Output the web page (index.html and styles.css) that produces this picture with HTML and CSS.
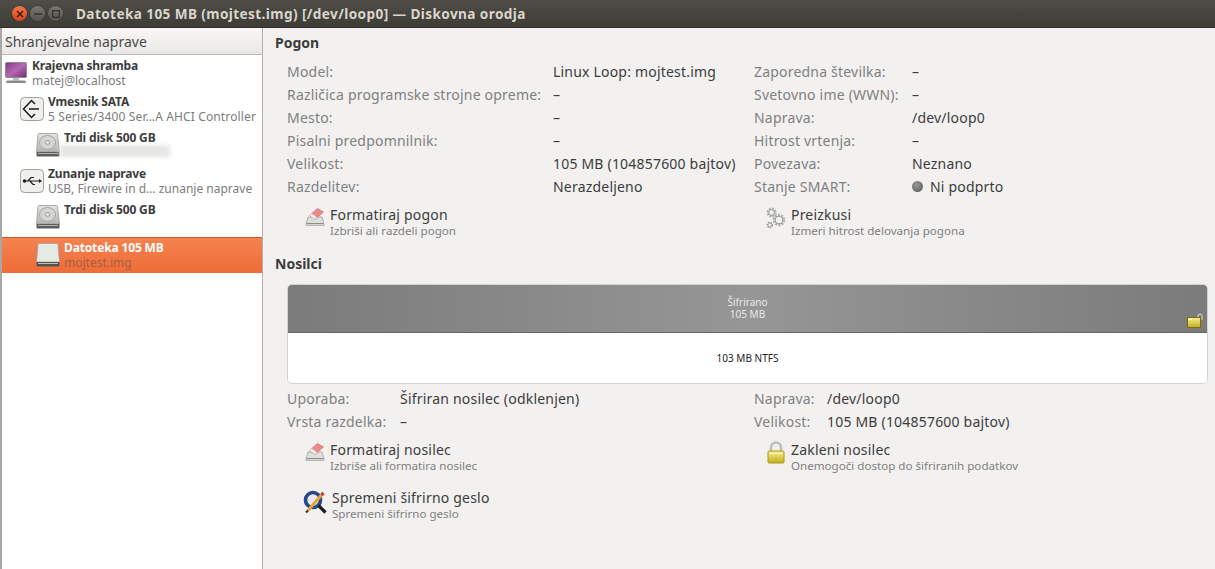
FILE: index.html
```html
<!DOCTYPE html>
<html lang="sl">
<head>
<meta charset="utf-8">
<title>Diskovna orodja</title>
<link rel="stylesheet" href="styles.css">
</head>
<body>
<svg class="defs" width="0" height="0" aria-hidden="true">
  <defs>
    <linearGradient id="hddBody" x1="0" y1="0" x2="0" y2="1"><stop offset="0" stop-color="#e4e4e2"/><stop offset="1" stop-color="#b4b4b0"/></linearGradient>
    <linearGradient id="gold" x1="0" y1="0" x2="0" y2="1"><stop offset="0" stop-color="#f6ee8e"/><stop offset="1" stop-color="#c4ae1e"/></linearGradient>
    <linearGradient id="screen" x1="0" y1="0" x2="1" y2="1"><stop offset="0" stop-color="#7a3a86"/><stop offset=".5" stop-color="#b668b4"/><stop offset="1" stop-color="#6a2c70"/></linearGradient>
    <symbol id="hdd" viewBox="0 0 24 24">
      <path d="M3 .5h17.500a1 1 0 0 1 1 1L23.500 19H.5L2 1.500a1 1 0 0 1 1-1z" fill="url(#hddBody)" stroke="#9a9a96" stroke-width=".8"/>
      <ellipse cx="11.500" cy="9.500" rx="8" ry="7" fill="#d4d4d1" stroke="#a4a4a0"/>
      <ellipse cx="11.500" cy="9.500" rx="2.200" ry="1.800" fill="#efefec" stroke="#999"/>
      <path d="M.5 19h23v3.500a1 1 0 0 1-1 1h-21a1 1 0 0 1-1-1z" fill="#5c5c58"/>
      <path d="M2 20.500h20" stroke="#c9c9c5" stroke-width=".8"/>
    </symbol>
    <symbol id="fmt" viewBox="0 0 20 20">
      <path d="M3 10h14l2 7v1.500H1V17z" fill="#dededb" stroke="#a2a29e" stroke-width=".8"/>
      <path d="M1.500 16.500h17" stroke="#8d8d89"/>
      <path d="M1.500 18h17" stroke="#c5c5c1"/>
      <path d="M4.500 8.500 12.500 1.500l6 3.500-8.500 7.500z" fill="#ec8a8c" stroke="#c96a6c" stroke-width=".7"/>
      <path d="M4.500 8.500l5.500 4 2.200-2-5.500-4z" fill="#f3f0ee" stroke="#c4bcb8" stroke-width=".5"/>
    </symbol>
    <symbol id="gears" viewBox="0 0 20 22">
      <g fill="none">
        <circle cx="5.500" cy="5.500" r="3.600" stroke="#b4b4b1" stroke-width="2.800" stroke-dasharray="1.900 .9"/>
        <circle cx="5.500" cy="5.500" r="3" stroke="#a2a29f" stroke-width="1"/>
        <circle cx="13" cy="13" r="4.800" stroke="#b4b4b1" stroke-width="3" stroke-dasharray="2 1"/>
        <circle cx="13" cy="13" r="4" stroke="#9f9f9c" stroke-width="1"/>
        <circle cx="3.800" cy="18" r="2.200" stroke="#8f8f8c" stroke-width="2" stroke-dasharray="1.200 .8"/>
      </g>
    </symbol>
    <symbol id="lock" viewBox="0 0 20 24">
      <path d="M5 11V6.500a5 5 0 0 1 10 0V11" fill="none" stroke="#bdbdb9" stroke-width="2.400"/>
      <rect x="2" y="10" width="16" height="12" rx="1" fill="url(#gold)" stroke="#a8961a"/>
      <path d="M3 12.500h14" stroke="#fbf6b8"/>
    </symbol>
    <symbol id="key" viewBox="0 0 26 26">
      <circle cx="10" cy="10" r="7.500" fill="none" stroke="#28478f" stroke-width="3.600"/>
      <circle cx="10" cy="10" r="5" fill="#e7e9ee" opacity=".8"/>
      <path d="M15.500 15.500l7 7" stroke="#1d1d1d" stroke-width="3.200"/>
      <path d="M5 20.500 18.500 5" stroke="#e8a33a" stroke-width="3.200"/>
      <path d="M18.500 5l2-2" stroke="#c23a28" stroke-width="3.200"/>
      <path d="M5 20.500l-2 2" stroke="#333" stroke-width="2.200"/>
    </symbol>
  </defs>
</svg>

<div class="window">
  <header class="titlebar">
    <div class="controls">
      <span class="ctl close"><svg viewBox="0 0 8 8" width="8" height="8"><path d="M1 1l6 6M7 1 1 7" stroke="#3a1508" stroke-width="1.400"/></svg></span>
      <span class="ctl"><svg viewBox="0 0 8 8" width="8" height="8"><path d="M0 4h8" stroke="#2f2e2a" stroke-width="1.400"/></svg></span>
      <span class="ctl"><svg viewBox="0 0 8 8" width="8" height="8"><rect x=".7" y=".7" width="6.600" height="6.600" fill="none" stroke="#2f2e2a" stroke-width="1.200"/></svg></span>
    </div>
    <h1 class="title">Datoteka 105 MB (mojtest.img) [/dev/loop0] — Diskovna orodja</h1>
  </header>

  <div class="content">
    <aside class="sidebar">
      <div class="side-head">Shranjevalne naprave</div>
      <ul class="tree">
        <li class="node lvl0">
          <svg class="node-icon" width="24" height="24" viewBox="0 0 24 24"><rect x="1.500" y="1.500" width="21" height="15" rx="1" fill="url(#screen)" stroke="#8e8e8a"/><path d="M9 17h6v2.500H9z" fill="#bdbdb9"/><path d="M3 19.500h18l1.500 2.500h-21z" fill="#8b8b87"/></svg>
          <div class="node-text"><b>Krajevna shramba</b><span>matej@localhost</span></div>
        </li>
        <li class="node lvl1">
          <svg class="node-icon" width="24" height="24" viewBox="0 0 24 24"><rect x=".5" y=".5" width="23" height="23" rx="4" fill="#f0efeb" stroke="#a3a39f"/><path d="M15 7 11.500 3.500 3.500 12l8 8.500L15 17M9 12h10" fill="none" stroke="#1c1c1c" stroke-width="1.500"/></svg>
          <div class="node-text"><b>Vmesnik SATA</b><span class="wide-sub">5 Series/3400 Ser…A AHCI Controller</span></div>
        </li>
        <li class="node lvl2">
          <svg class="node-icon" width="24" height="24"><use href="#hdd"/></svg>
          <div class="node-text"><b>Trdi disk 500 GB</b><span class="smudge"></span></div>
        </li>
        <li class="node lvl1">
          <svg class="node-icon" width="24" height="24" viewBox="0 0 24 24"><rect x=".5" y=".5" width="23" height="23" rx="4" fill="#f0efeb" stroke="#a3a39f"/><path d="M4 12h16M8 12l3-3.500h3M10 12l3 3.500h2" fill="none" stroke="#1c1c1c" stroke-width="1.200"/><circle cx="4.500" cy="12" r="1.700" fill="#1c1c1c"/><path d="M19 10l3 2-3 2z" fill="#1c1c1c"/></svg>
          <div class="node-text"><b>Zunanje naprave</b><span>USB, Firewire in d… zunanje naprave</span></div>
        </li>
        <li class="node lvl2">
          <svg class="node-icon" width="24" height="24"><use href="#hdd"/></svg>
          <div class="node-text"><b>Trdi disk 500 GB</b></div>
        </li>
        <li class="node lvl2 selected">
          <svg class="node-icon" width="24" height="24" viewBox="0 0 24 24"><path d="M3 .5h18a1 1 0 0 1 1 1L23.500 19H.5L2 1.500a1 1 0 0 1 1-1z" fill="#e8e8e5" stroke="#a5a5a1" stroke-width=".8"/><path d="M.5 19h23v3.500a1 1 0 0 1-1 1h-21a1 1 0 0 1-1-1z" fill="#55554f"/><path d="M2 20.500h20" stroke="#d6d6d2" stroke-width=".8"/></svg>
          <div class="node-text"><b>Datoteka 105 MB</b><span>mojtest.img</span></div>
        </li>
      </ul>
    </aside>

    <main class="main">
      <section class="drive">
        <h2 class="heading">Pogon</h2>
        <dl class="props props-drive">
          <dt>Model:</dt><dd>Linux Loop: mojtest.img</dd><dt>Zaporedna številka:</dt><dd>–</dd>
          <dt>Različica programske strojne opreme:</dt><dd>–</dd><dt>Svetovno ime (WWN):</dt><dd>–</dd>
          <dt>Mesto:</dt><dd>–</dd><dt>Naprava:</dt><dd>/dev/loop0</dd>
          <dt>Pisalni predpomnilnik:</dt><dd>–</dd><dt>Hitrost vrtenja:</dt><dd>–</dd>
          <dt>Velikost:</dt><dd>105 MB (104857600 bajtov)</dd><dt>Povezava:</dt><dd>Neznano</dd>
          <dt>Razdelitev:</dt><dd>Nerazdeljeno</dd><dt>Stanje SMART:</dt><dd><i class="dot"></i>Ni podprto</dd>
        </dl>
        <div class="actions">
          <div class="action">
            <svg class="act-icon" width="20" height="20"><use href="#fmt"/></svg>
            <div class="act-text"><b>Formatiraj pogon</b><span>Izbriši ali razdeli pogon</span></div>
          </div>
          <div class="action">
            <svg class="act-icon" width="20" height="22"><use href="#gears"/></svg>
            <div class="act-text"><b>Preizkusi</b><span>Izmeri hitrost delovanja pogona</span></div>
          </div>
        </div>
      </section>

      <section class="volumes">
        <h2 class="heading">Nosilci</h2>
        <div class="volbar">
          <div class="vol-top">
            <span>Šifrirano</span><span>105 MB</span>
            <svg class="vol-lock" width="16" height="15" viewBox="0 0 16 15"><path d="M11 6V3.200a2 2 0 0 1 4 0V7" fill="none" stroke="#c4c4c0" stroke-width="1.300"/><rect x=".5" y="4.500" width="13" height="10" fill="url(#gold)" stroke="#7d6e08"/><path d="M2 6.500h3" stroke="#fff"/></svg>
          </div>
          <div class="vol-bottom">103 MB NTFS</div>
        </div>
        <dl class="props props-vol">
          <dt>Uporaba:</dt><dd>Šifriran nosilec (odklenjen)</dd><dt>Naprava:</dt><dd>/dev/loop0</dd>
          <dt>Vrsta razdelka:</dt><dd>–</dd><dt>Velikost:</dt><dd>105 MB (104857600 bajtov)</dd>
        </dl>
        <div class="actions">
          <div class="action">
            <svg class="act-icon" width="20" height="20"><use href="#fmt"/></svg>
            <div class="act-text"><b>Formatiraj nosilec</b><span>Izbriše ali formatira nosilec</span></div>
          </div>
          <div class="action">
            <svg class="act-icon lock-icon" width="20" height="24"><use href="#lock"/></svg>
            <div class="act-text"><b>Zakleni nosilec</b><span>Onemogoči dostop do šifriranih podatkov</span></div>
          </div>
          <div class="action action-key">
            <svg class="act-icon" width="26" height="26"><use href="#key"/></svg>
            <div class="act-text"><b>Spremeni šifrirno geslo</b><span>Spremeni šifrirno geslo</span></div>
          </div>
        </div>
      </section>
    </main>
  </div>
</div>
</body>
</html>
```

FILE: styles.css
```css
* { box-sizing: border-box; }
html, body { margin: 0; padding: 0; height: 100%; overflow: hidden; }
body { font-family: "Noto Sans", "Open Sans", sans-serif; font-size: 14px; color: #3c3c3c; background: #f2f1f0; }
.defs { position: absolute; }
.window { height: 569px; display: flex; flex-direction: column; }

.titlebar { height: 28px; flex: none; display: flex; align-items: center; padding: 0 0 0 12px; background: linear-gradient(#4f4d47, #3d3c37); border-bottom: 1px solid #2e2d29; }
.controls { display: flex; gap: 3px; width: 64px; flex: none; }
.ctl { width: 15px; height: 15px; border-radius: 50%; background: linear-gradient(#77766f, #55544e); display: flex; align-items: center; justify-content: center; box-shadow: 0 0 0 .5px #33322e; }
.ctl.close { background: linear-gradient(#f2784a, #d6451b); }
.title { margin: 0; font-size: 13.600px; font-weight: 700; color: #d9d5cb; letter-spacing: .4px; white-space: nowrap; }

.content { flex: 1; display: flex; min-height: 0; }

.sidebar { width: 263px; flex: none; background: #fff; border-left: 2px solid #a9a8a4; border-right: 1px solid #b3b0aa; }
.side-head { height: 27px; padding-left: 3px; display: flex; align-items: center; font-size: 14px; color: #4a4a48; background: linear-gradient(#f8f7f6, #e9e8e6); border-bottom: 1px solid #bcbab6; }
.tree { list-style: none; margin: 0; padding: 0; }
.node { height: 36px; display: flex; align-items: center; gap: 4px; font-size: 12px; line-height: 15px; white-space: nowrap; }
.lvl0 { padding-left: 2px; }
.lvl1 { padding-left: 18px; }
.lvl2 { padding-left: 34px; }
.node-icon { flex: none; }
.node-text { display: flex; flex-direction: column; color: #7c7c7c; min-height: 30px; }
.node-text b { color: #3c3c3c; font-weight: 700; letter-spacing: -.15px; }
.node-text .wide-sub { letter-spacing: .13px; }
.smudge { height: 12px; width: 110px; margin-left: -4px; background: #e6e6e4; filter: blur(2px); }
.selected { height: 36px; margin-top: 2px; padding-bottom: 2px; background: linear-gradient(#f5824f, #ee6c38); border-top: 1px solid #c85a30; }
.selected .node-text b { color: #fff; }
.selected .node-text span { color: #a85f42; }

.main { flex: 1; min-width: 0; padding: 5px 7px 0 12px; }
.heading { margin: 0; font-size: 14px; line-height: 20px; font-weight: 700; color: #3c3c3c; }
.props { margin: 0; padding-left: 12px; display: grid; grid-auto-rows: 23px; align-items: center; white-space: nowrap; letter-spacing: .2px; }
.props dt { color: #808080; }
.props dd { margin: 0; color: #3c3c3c; display: flex; align-items: center; }
.props-drive { margin-top: 7px; grid-template-columns: 266px 201px 158px 1fr; }
.props-vol { margin-top: 3px; grid-template-columns: 113px 354px 73px 1fr; }
.dot { width: 11px; height: 11px; border-radius: 50%; margin-right: 7px; background: radial-gradient(circle at 40% 35%, #999, #555); }

.actions { margin-top: 8px; padding-left: 30px; display: grid; grid-template-columns: 461px 1fr; row-gap: 12px; }
.action { display: flex; align-items: flex-start; gap: 5px; height: 36px; }
.act-icon { flex: none; margin-top: 1px; }
.lock-icon { margin-top: 0; }
.act-text { display: flex; flex-direction: column; white-space: nowrap; }
.act-text b { font-weight: 400; font-size: 14px; line-height: 17px; letter-spacing: .2px; color: #3c3c3c; }
.act-text span { font-size: 11.600px; line-height: 15px; color: #808080; }
.action-key { margin-left: -2px; gap: 3px; }

.volumes { margin-top: 12px; }
.volbar { margin: 10px 0 3px 12px; height: 100px; border-radius: 5px; overflow: hidden; border: 1px solid #d5d3cf; }
.vol-top { position: relative; height: 49px; margin: -1px -1px 0; background: linear-gradient(90deg, #7b7b7b, #969696 50%, #7b7b7b); border-bottom: 1px solid #666; display: flex; flex-direction: column; align-items: center; justify-content: center; color: #e8e8e8; font-size: 10px; line-height: 12px; }
.vol-lock { position: absolute; right: 5px; bottom: 4px; }
.vol-bottom { height: 50px; background: #fff; display: flex; align-items: center; justify-content: center; font-size: 10px; color: #222; }
```
